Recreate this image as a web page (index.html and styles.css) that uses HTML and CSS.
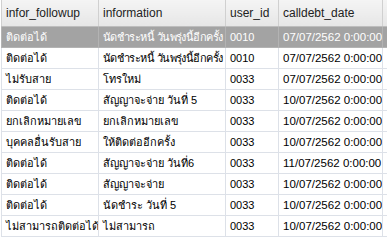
FILE: index.html
```html
<!DOCTYPE html>
<html>
<head>
<meta charset="utf-8">
<link rel="stylesheet" href="styles.css">
</head>
<body>
<div class="grid">
<table class="data">
<colgroup><col class="c1"><col class="c2"><col class="c3"><col class="c4"><col class="c5"></colgroup>
<thead>
<tr><th>infor_followup</th><th>information</th><th>user_id</th><th>calldebt_date</th><th></th></tr>
</thead>
<tbody>
<tr class="sel"><td>ติดต่อได้</td><td class="tight">นัดชำระหนี้ วันพรุ่งนี้อีกครั้ง</td><td>0010</td><td class="num">07/07/2562 0:00:00</td><td></td></tr>
<tr><td>ติดต่อได้</td><td class="tight">นัดชำระหนี้ วันพรุ่งนี้อีกครั้ง</td><td>0010</td><td class="num">07/07/2562 0:00:00</td><td></td></tr>
<tr><td>ไม่รับสาย</td><td>โทรใหม่</td><td>0033</td><td class="num">07/07/2562 0:00:00</td><td></td></tr>
<tr><td>ติดต่อได้</td><td>สัญญาจะจ่าย วันที่ 5</td><td>0033</td><td class="num">10/07/2562 0:00:00</td><td></td></tr>
<tr><td>ยกเลิกหมายเลข</td><td>ยกเลิกหมายเลข</td><td>0033</td><td class="num">10/07/2562 0:00:00</td><td></td></tr>
<tr><td>บุคคลอื่นรับสาย</td><td>ให้ติดต่ออีกครั้ง</td><td>0033</td><td class="num">10/07/2562 0:00:00</td><td></td></tr>
<tr><td>ติดต่อได้</td><td>สัญญาจะจ่าย วันที่6</td><td>0033</td><td class="num">11/07/2562 0:00:00</td><td></td></tr>
<tr><td>ติดต่อได้</td><td>สัญญาจะจ่าย</td><td>0033</td><td class="num">10/07/2562 0:00:00</td><td></td></tr>
<tr><td>ติดต่อได้</td><td>นัดชำระ วันที่ 5</td><td>0033</td><td class="num">10/07/2562 0:00:00</td><td></td></tr>
<tr><td>ไม่สามารถติดต่อได้</td><td>ไม่สามารถ</td><td>0033</td><td class="num">10/07/2562 0:00:00</td><td></td></tr>
</tbody>
</table>
</div>
</body>
</html>
```

FILE: styles.css
```css
html, body {
  margin: 0;
  padding: 0;
  background: #ffffff;
  width: 387px;
  height: 245px;
  overflow: hidden;
}
.grid {
  padding-left: 1px;
  font-family: "Liberation Sans", "Noto Sans", sans-serif;
  font-size: 11px;
  color: #000;
}
.data {
  border-collapse: collapse;
  table-layout: fixed;
  width: 400px;
}
.c1 { width: 97px; }
.c2 { width: 127px; }
.c3 { width: 53px; }
.c4 { width: 104px; }
.c5 { width: 19px; }
.data th {
  height: 26px;
  padding: 0 4px;
  box-sizing: border-box;
  text-align: left;
  font-weight: normal;
  font-size: 12px;
  color: #222;
  background: linear-gradient(#f4f4f4, #e6e6e6);
  border-left: 1px solid #d0d0d0;
  border-right: 1px solid #d0d0d0;
  border-bottom: 1px solid #bdbdbd;
  white-space: nowrap;
  overflow: hidden;
}
.data td {
  height: 21px;
  padding: 0 4px;
  box-sizing: border-box;
  border: 1px solid #dde1e8;
  white-space: nowrap;
  overflow: hidden;
}
.data td.tight { letter-spacing: -0.55px; padding-right: 1px; }
.data td.num { text-align: right; font-size: 11.5px; padding-right: 3px; }
.data tr.sel td {
  background: #a3a3a3;
  color: #fff;
  border-color: #b3b3b3;
}
```
